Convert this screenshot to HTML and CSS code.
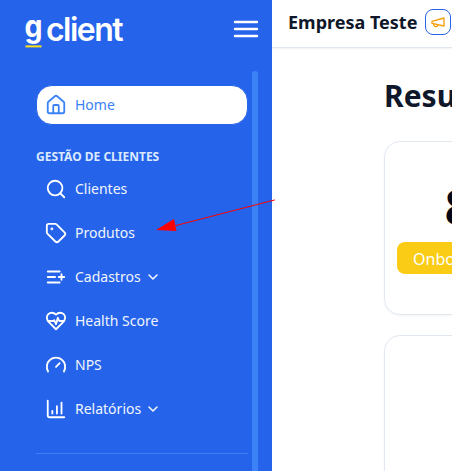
FILE: index.html
```html
<!DOCTYPE html>
<html lang="pt-BR">
<head>
<meta charset="utf-8">
<title>g client</title>
<link rel="stylesheet" href="styles.css">
</head>
<body>
<div class="app">
  <aside class="sidebar">
    <div class="brand">
      <svg class="logo" viewBox="0 0 100 40" role="img" aria-label="g client">
        <text class="logo-g" x="-0.5" y="26" textLength="18" lengthAdjust="spacingAndGlyphs">g</text>
        <text class="logo-name" x="21" y="30" textLength="77.5" lengthAdjust="spacing">client</text>
        <rect class="logo-line" x="0.5" y="34.4" width="16" height="2"/>
      </svg>
      <svg class="bars" viewBox="0 0 24 24"><path d="M3.75 6.75h16.5M3.75 12h16.5M3.75 17.25h16.5"/></svg>
    </div>
    <div class="scroll">
      <nav class="nav">
        <a class="item active"><svg class="icon" viewBox="0 0 24 24"><path d="M15 21v-8a1 1 0 0 0-1-1h-4a1 1 0 0 0-1 1v8"/><path d="M3 10a2 2 0 0 1 .709-1.528l7-5.999a2 2 0 0 1 2.582 0l7 5.999A2 2 0 0 1 21 10v9a2 2 0 0 1-2 2H5a2 2 0 0 1-2-2z"/></svg><span class="label">Home</span></a>
        <h2 class="group">GESTÃO DE CLIENTES</h2>
        <a class="item"><svg class="icon" viewBox="0 0 24 24"><circle cx="11" cy="11" r="8"/><path d="m21 21-4.3-4.3"/></svg><span class="label">Clientes</span></a>
        <a class="item"><svg class="icon" viewBox="0 0 24 24"><path d="M12.586 2.586A2 2 0 0 0 11.172 2H4a2 2 0 0 0-2 2v7.172a2 2 0 0 0 .586 1.414l8.704 8.704a2.426 2.426 0 0 0 3.42 0l6.58-6.58a2.426 2.426 0 0 0 0-3.42z"/><circle cx="7.5" cy="7.5" r=".5" fill="currentColor"/></svg><span class="label">Produtos</span></a>
        <a class="item"><svg class="icon" viewBox="0 0 24 24"><path d="M11 12H3M16 6H3M16 18H3M18 9v6M21 12h-6"/></svg><span class="label">Cadastros</span><svg class="chevron" viewBox="0 0 24 24"><path d="m6 9 6 6 6-6"/></svg></a>
        <a class="item"><svg class="icon" viewBox="0 0 24 24"><path d="M19 14c1.49-1.46 3-3.21 3-5.5A5.5 5.5 0 0 0 16.5 3c-1.76 0-3 .5-4.5 2-1.5-1.5-2.74-2-4.5-2A5.5 5.5 0 0 0 2 8.5c0 2.3 1.5 4.05 3 5.5l7 7Z"/><path d="M3.22 12H9.5l.5-1 2 4.5 2-7 1.5 3.5h5.27"/></svg><span class="label">Health Score</span></a>
        <a class="item"><svg class="icon" viewBox="0 0 24 24"><path d="m12 14 4-4"/><path d="M3.34 19a10 10 0 1 1 17.32 0"/></svg><span class="label">NPS</span></a>
        <a class="item"><svg class="icon" viewBox="0 0 24 24"><path d="M3 3v16a2 2 0 0 0 2 2h16M18 17V5M13 17V9M8 17v-3"/></svg><span class="label">Relatórios</span><svg class="chevron" viewBox="0 0 24 24"><path d="m6 9 6 6 6-6"/></svg></a>
        <hr class="divider">
      </nav>
      <div class="track"></div>
    </div>
  </aside>
  <div class="page">
    <header class="topbar">
      <span class="company">Empresa Teste</span>
      <span class="news"><svg viewBox="0 0 24 24"><path d="m3 11 18-5v12L3 14v-3z"/><path d="M11.6 16.8a3 3 0 1 1-5.8-1.6"/></svg></span>
    </header>
    <main class="content">
      <h1 class="title">Resumo</h1>
      <section class="card">
        <strong class="count">8</strong>
        <span class="badge">Onboarding</span>
      </section>
      <section class="card"></section>
    </main>
  </div>
</div>
<svg class="arrow" viewBox="0 0 122 34"><path class="shaft" d="M118.5 3 20 28.5"/><path class="head" d="M0 33 18 22 20.5 34z"/></svg>
</body>
</html>
```
FILE: styles.css
```css
* { box-sizing: border-box; }
body {
  margin: 0;
  overflow: hidden;
  background: #fff;
  color: #0f172a;
  font-family: "Noto Sans", sans-serif;
}
svg {
  flex: none;
  fill: none;
  stroke: currentColor;
  stroke-width: 2;
  stroke-linecap: round;
  stroke-linejoin: round;
}
.app { display: flex; height: 471px; overflow: hidden; }
.sidebar {
  flex: none;
  display: flex;
  flex-direction: column;
  width: 272px;
  background: #2563eb;
  color: #fff;
}
.brand {
  flex: none;
  display: flex;
  justify-content: space-between;
  height: 71px;
  padding: 11px 10px 0 24.5px;
}
.logo { width: 100px; height: 40px; overflow: visible; stroke: none; fill: #fff; font-family: Inter, sans-serif; }
.logo-g { font-size: 31px; font-weight: 700; }
.logo-name { font-size: 32px; font-weight: 600; }
.logo-line { fill: #fde01a; }
.bars { width: 32px; height: 32px; margin-top: 2px; stroke-width: 1.8; }
.scroll { display: flex; flex: 1; gap: 4px; padding-left: 36px; }
.nav { display: flex; flex-direction: column; width: 212px; padding-top: 14px; }
.track { width: 6px; border-radius: 3px 3px 0 0; background: #3b82f6; }
.item {
  flex: none;
  display: flex;
  align-items: center;
  gap: 8px;
  height: 40px;
  margin-bottom: 4px;
  padding: 0 8px;
  border: 1px solid #2563eb;
  border-radius: 16px;
  font-size: 14px;
  color: #f1f5f9;
}
.label { line-height: 20px; padding-bottom: 1px; }
.active { background: #fff; color: #3b82f6; }
.icon { width: 22px; height: 22px; }
.item:not(.active) .icon { color: #fff; }
.chevron { width: 16px; height: 16px; margin-left: -4px; stroke-width: 2.4; }
.group {
  flex: none;
  height: 16px;
  margin: 20px 0 4px;
  font-size: 12px;
  line-height: 16px;
  font-weight: 700;
  color: #dbeafe;
}
.divider { flex: none; width: 100%; height: 1px; margin: 20px 0 0; border: 0; background: #3b82f6; }
.page { flex: 1; min-width: 0; overflow: hidden; }
.topbar {
  display: flex;
  align-items: center;
  gap: 8px;
  height: 48px;
  padding: 0 0 3px 16px;
  border-bottom: 1px solid #e2e8f0;
  box-shadow: 0 1px 2px rgba(0, 0, 0, .06);
}
.company { font-size: 18px; font-weight: 700; white-space: nowrap; }
.news {
  flex: none;
  display: grid;
  place-items: center;
  width: 26px;
  height: 26px;
  border: 1px solid #2563eb;
  border-radius: 8px;
  color: #f59e0b;
}
.news svg { width: 16px; height: 16px; }
.content { width: 262px; padding: 28px 0 0 112px; }
.title { margin: 0 0 25px; font-size: 30px; line-height: 40px; font-weight: 700; }
.card {
  display: flex;
  flex-direction: column;
  align-items: center;
  height: 174px;
  margin-bottom: 20px;
  padding: 41px 13px 0 12px;
  border: 1px solid #e2e8f0;
  border-radius: 16px;
  box-shadow: 0 1px 2px rgba(0, 0, 0, .05);
}
.count { font-size: 48px; line-height: 48px; color: #020617; }
.badge {
  width: 100%;
  height: 32px;
  margin-top: 11px;
  padding-left: 16px;
  border-radius: 8px;
  background: #facc15;
  color: #fff;
  font-size: 16px;
  line-height: 34px;
}
.arrow { position: absolute; left: 156px; top: 197px; width: 122px; height: 34px; stroke: none; }
.shaft { stroke: #f00; stroke-width: 1; }
.head { fill: #f00; }
```
